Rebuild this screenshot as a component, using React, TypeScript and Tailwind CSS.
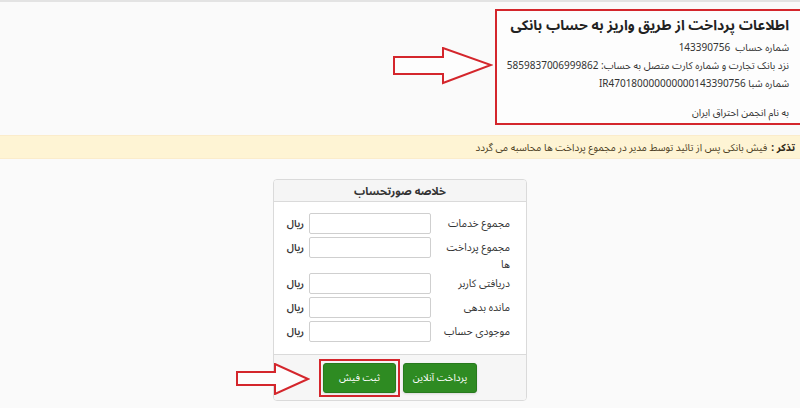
import { ReactNode } from 'react';

function TopArrow() {
  // hollow red arrow pointing at the bank info box
  return (
    <svg className="w-[100px] h-[38px] mt-[38px] mr-[2px]" viewBox="0 0 100 38" fill="none">
      <polygon
        points="1,10 50,10 50,1 98,18 50,36 50,27 1,27"
        fill="#fdfdfd"
        stroke="#d4262c"
        strokeWidth="2"
      />
    </svg>
  );
}

function BottomArrow() {
  return (
    <svg className="absolute left-[236px] top-[361px] w-[74px] h-[32px]" viewBox="0 0 74 32" fill="none">
      <polygon
        points="1,9 39,9 39,1 72,16 39,31 39,22 1,22"
        fill="#fdfdfd"
        stroke="#d4262c"
        strokeWidth="2"
      />
    </svg>
  );
}

function Row({ label, sub }: { label: string; sub?: string }) {
  return (
    <div className="flex items-start">
      <div className="w-[95px] pr-[16px] text-[10.5px] leading-[21px] text-[#333]">
        {label}
        {sub && <div className="leading-[12px]">{sub}</div>}
      </div>
      <input className="w-[122px] h-[21px] border border-[#cfcfcf] bg-white rounded-[2px]" />
      <span className="pr-[5px] text-[10px] font-semibold leading-[21px] text-[#333]">ریال</span>
    </div>
  );
}

function GreenButton({ children, w }: { children: ReactNode; w: string }) {
  return (
    <button className={`${w} h-[30px] bg-[#2e8b22] border border-[#277a1d] rounded-[3px] text-white text-[10px] shadow-sm`}>
      {children}
    </button>
  );
}

export default function App() {
  return (
    <div
      dir="rtl"
      className="relative w-[800px] h-[408px] overflow-hidden bg-[#fafafa] border-t-2 border-[#e3e3e3] font-['Noto_Sans','Noto_Sans_Arabic',sans-serif]"
    >
      {/* bank transfer info */}
      <div dir="ltr" className="flex justify-end items-start pt-[7px]">
        <TopArrow />
        <div dir="rtl" className="w-[305px] h-[116px] border-2 border-r-0 border-[#d4262c] bg-[#fdfdfd] pr-[11px] pt-[1px] whitespace-nowrap">
          <h2 className="text-[14px] font-bold leading-[26px] text-[#222]">
            اطلاعات پرداخت از طریق واریز به حساب بانکی
          </h2>
          <div className="text-[10px] leading-[18px] text-[#333]">
            <div>شماره حساب&nbsp; 143390756</div>
            <div>نزد بانک تجارت و شماره کارت متصل به حساب: 5859837006999862</div>
            <div>شماره شبا IR470180000000000143390756</div>
            <div className="mt-[11px]">به نام انجمن احتراق ایران</div>
          </div>
        </div>
      </div>

      {/* reminder */}
      <div className="mt-[10px] h-[24px] bg-[#fef4d4] border-y border-[#fbeccb] pr-[5px] flex items-center text-[10px] text-[#4a3c22] whitespace-nowrap">
        <span className="font-bold text-[#2f2615]">تذکر :</span>
        <span className="mr-[4px]">فیش بانکی پس از تائید توسط مدیر در مجموع پرداخت ها محاسبه می گردد</span>
      </div>

      {/* invoice summary */}
      <div className="mt-[20px] mx-auto w-[254px] border border-[#dadada] rounded-[4px] bg-white overflow-hidden">
        <div className="h-[22px] bg-[#f5f5f5] border-b border-[#dadada] text-center text-[11px] font-bold leading-[21px] text-[#333]">
          خلاصه صورتحساب
        </div>
        <div className="pt-[11px] pb-[12px] flex flex-col gap-[3px]">
          <Row label="مجموع خدمات" />
          <Row label="مجموع پرداخت" sub="ها" />
          <Row label="دریافتی کاربر" />
          <Row label="مانده بدهی" />
          <Row label="موجودی حساب" />
        </div>
        <div className="h-[46px] bg-[#f6f6f6] border-t border-[#dadada] flex items-center justify-center gap-[3px] pr-[4px]">
          <GreenButton w="w-[74px]">پرداخت آنلاین</GreenButton>
          <div className="border-2 border-[#d4262c] p-[2px]">
            <GreenButton w="w-[73px]">ثبت فیش</GreenButton>
          </div>
        </div>
      </div>

      <BottomArrow />
    </div>
  );
}
